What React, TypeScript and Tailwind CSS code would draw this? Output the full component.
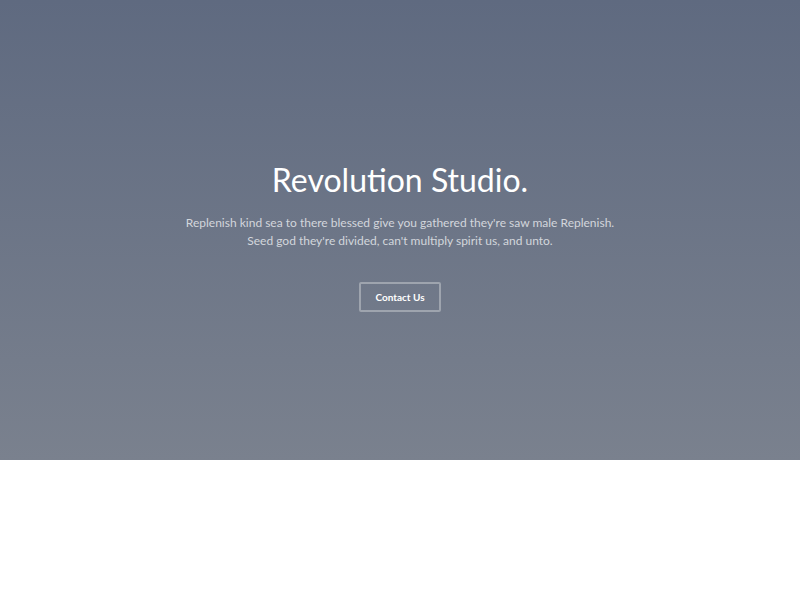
export default function App() {
  return (
    <div className="w-[800px] h-[600px] bg-white">
      <section className="h-[460px] bg-gradient-to-b from-[#5f6a80] to-[#7a818e] flex flex-col items-center pt-[160px]">
        <h1 className="text-white text-[32px] leading-[40px] font-['Lato',sans-serif] font-normal">Revolution Studio.</h1>
        <p className="mt-[14px] text-center text-[#d3d6dc] text-[12px] leading-[18px] font-['Lato',sans-serif]">
          Replenish kind sea to there blessed give you gathered they're saw male Replenish.
          <br />
          Seed god they're divided, can't multiply spirit us, and unto.
        </p>
        <button className="mt-[32px] w-[82px] h-[30px] border-2 border-[#9ea4ae] rounded-[2px] text-white text-[10px] font-bold font-['Lato',sans-serif]">
          Contact Us
        </button>
      </section>
    </div>
  );
}
